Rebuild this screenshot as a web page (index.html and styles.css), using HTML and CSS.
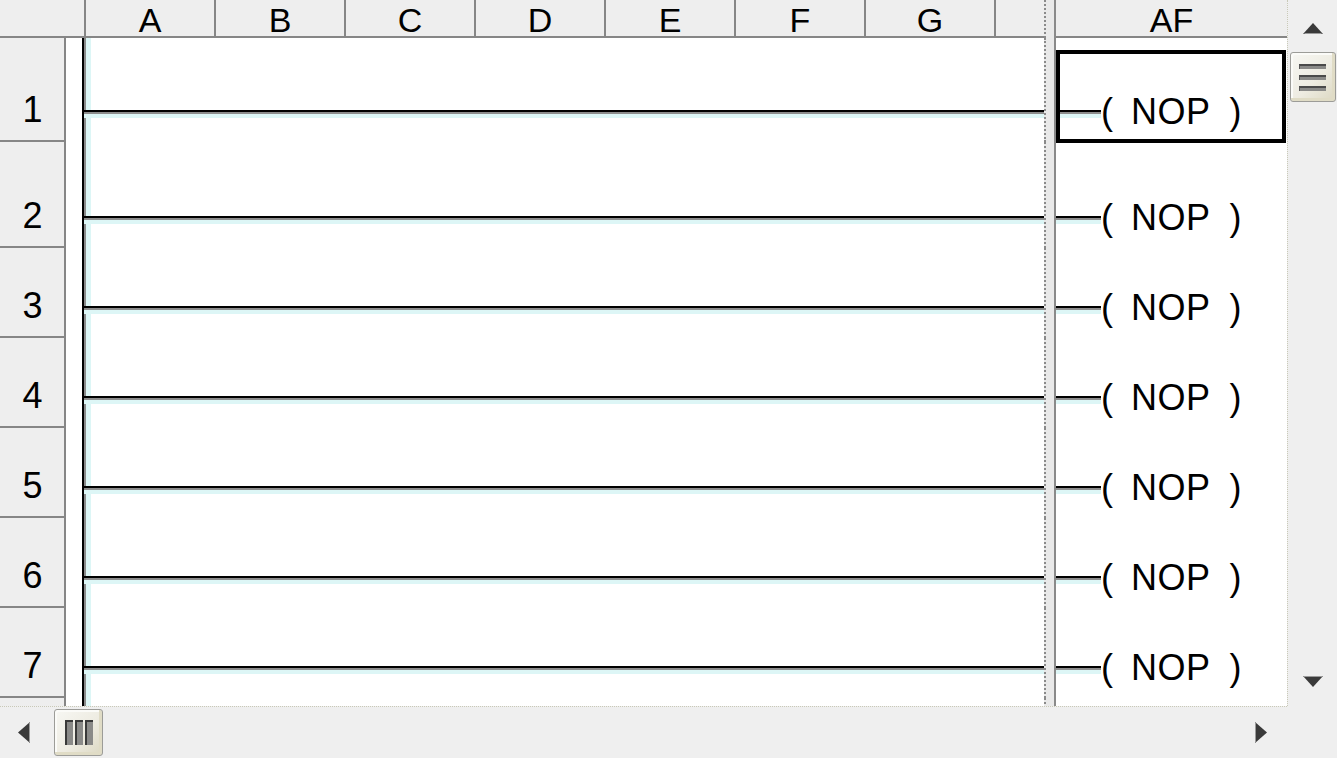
FILE: index.html
```html
<!DOCTYPE html>
<html>
<head>
<meta charset="utf-8">
<title>Ladder</title>
<link rel="stylesheet" href="styles.css">
</head>
<body>
<div class="app">
  <div class="sheet">
    <div class="hdr">
      <div class="hcorner"></div>
      <div class="hcol">A</div>
      <div class="hcol">B</div>
      <div class="hcol">C</div>
      <div class="hcol">D</div>
      <div class="hcol">E</div>
      <div class="hcol">F</div>
      <div class="hcol">G</div>
      <div class="hcol hcol-h"></div>
      <div class="split"></div>
      <div class="hcol hcol-af">AF</div>
    </div>
    <div class="body">
      <div class="row row-1">
        <div class="num">1</div>
        <div class="gutter"></div>
        <div class="ladder"><div class="line"><div class="rung"></div></div></div>
        <div class="split"></div>
        <div class="coil">
          <div class="line"><div class="rung wire"></div><span class="paren">(</span><span class="op">NOP</span><span class="paren paren-r">)</span></div>
          <div class="select"></div>
        </div>
      </div>
      <div class="row row-2">
        <div class="num">2</div>
        <div class="gutter"></div>
        <div class="ladder"><div class="line"><div class="rung"></div></div></div>
        <div class="split"></div>
        <div class="coil">
          <div class="line"><div class="rung wire"></div><span class="paren">(</span><span class="op">NOP</span><span class="paren paren-r">)</span></div>
        </div>
      </div>
      <div class="row">
        <div class="num">3</div>
        <div class="gutter"></div>
        <div class="ladder"><div class="line"><div class="rung"></div></div></div>
        <div class="split"></div>
        <div class="coil">
          <div class="line"><div class="rung wire"></div><span class="paren">(</span><span class="op">NOP</span><span class="paren paren-r">)</span></div>
        </div>
      </div>
      <div class="row">
        <div class="num">4</div>
        <div class="gutter"></div>
        <div class="ladder"><div class="line"><div class="rung"></div></div></div>
        <div class="split"></div>
        <div class="coil">
          <div class="line"><div class="rung wire"></div><span class="paren">(</span><span class="op">NOP</span><span class="paren paren-r">)</span></div>
        </div>
      </div>
      <div class="row">
        <div class="num">5</div>
        <div class="gutter"></div>
        <div class="ladder"><div class="line"><div class="rung"></div></div></div>
        <div class="split"></div>
        <div class="coil">
          <div class="line"><div class="rung wire"></div><span class="paren">(</span><span class="op">NOP</span><span class="paren paren-r">)</span></div>
        </div>
      </div>
      <div class="row">
        <div class="num">6</div>
        <div class="gutter"></div>
        <div class="ladder"><div class="line"><div class="rung"></div></div></div>
        <div class="split"></div>
        <div class="coil">
          <div class="line"><div class="rung wire"></div><span class="paren">(</span><span class="op">NOP</span><span class="paren paren-r">)</span></div>
        </div>
      </div>
      <div class="row">
        <div class="num">7</div>
        <div class="gutter"></div>
        <div class="ladder"><div class="line"><div class="rung"></div></div></div>
        <div class="split"></div>
        <div class="coil">
          <div class="line"><div class="rung wire"></div><span class="paren">(</span><span class="op">NOP</span><span class="paren paren-r">)</span></div>
        </div>
      </div>
      <div class="row">
        <div class="num"></div>
        <div class="gutter"></div>
        <div class="ladder"></div>
        <div class="split"></div>
        <div class="coil"></div>
      </div>
    </div>
  </div>

  <div class="vscroll">
    <div class="sb-btn sb-up">
      <svg width="20" height="11" viewBox="0 0 20 11"><polygon points="10,0 20,11 0,11" fill="#3a3a3a"/><polygon points="2,11 18,11 19,10 1,10" fill="#9a9a9a"/></svg>
    </div>
    <div class="thumb vthumb">
      <span class="grip-h"></span><span class="grip-h"></span><span class="grip-h"></span>
    </div>
    <div class="sb-fill"></div>
    <div class="sb-btn sb-down">
      <svg width="20" height="11" viewBox="0 0 20 11"><polygon points="0,0 20,0 10,11" fill="#3a3a3a"/><polygon points="0,0 20,0 19,1 1,1" fill="#9a9a9a"/></svg>
    </div>
  </div>

  <div class="hscroll">
    <div class="sb-btn sb-left">
      <svg width="12" height="21" viewBox="0 0 12 21"><polygon points="0,10.5 12,0 12,21" fill="#3a3a3a"/><polygon points="11,1 12,0 12,21 11,20" fill="#9a9a9a"/></svg>
    </div>
    <div class="thumb hthumb">
      <span class="grip-v"></span><span class="grip-v"></span><span class="grip-v"></span>
    </div>
    <div class="sb-fill"></div>
    <div class="sb-btn sb-right">
      <svg width="12" height="21" viewBox="0 0 12 21"><polygon points="0,0 12,10.5 0,21" fill="#3a3a3a"/><polygon points="0,0 1,1 1,20 0,21" fill="#9a9a9a"/></svg>
    </div>
  </div>

  <div class="sb-corner"></div>
</div>
</body>
</html>
```

FILE: styles.css
```css
* {
  box-sizing: border-box;
  margin: 0;
  padding: 0;
}

html, body {
  width: 1337px;
  height: 758px;
  overflow: hidden;
  background: #ffffff;
}

body {
  font-family: "Liberation Sans", Arial, sans-serif;
  color: #000000;
}

.app {
  display: grid;
  grid-template-columns: 1287px 50px;
  grid-template-rows: 706px 52px;
  width: 1337px;
  height: 758px;
}

/* ---------- sheet ---------- */
.sheet {
  display: flex;
  flex-direction: column;
  overflow: hidden;
  background: #ffffff;
}

.hdr {
  display: flex;
  height: 38px;
  flex: none;
}

.hcorner {
  width: 86px;
  flex: none;
  background: #eeeeee;
  border-right: 2px solid #868686;
  border-bottom: 2px solid #868686;
}

.hcol {
  width: 130px;
  flex: none;
  background: #eeeeee;
  border-right: 2px solid #868686;
  border-bottom: 2px solid #868686;
  text-align: center;
  font-size: 34px;
  line-height: 32px;
  padding-top: 4px;
}

.hcol-h {
  width: 48px;
  border-right: none;
}

.hcol-af {
  width: 231px;
  border-right: none;
}

.split {
  width: 12px;
  flex: none;
  background: #e9e9e9;
  border-left: 2px dotted #8a8a8a;
  border-right: 2px solid #8a8a8a;
}

.body {
  flex: 1;
  display: flex;
  flex-direction: column;
  overflow: hidden;
}

.row {
  display: flex;
  flex: none;
  height: 90px;
}

.row-1 {
  height: 104px;
}

.row-2 {
  height: 106px;
}

.num {
  width: 66px;
  flex: none;
  background: #eeeeee;
  border-right: 2px solid #868686;
  border-bottom: 2px solid #868686;
  display: flex;
  align-items: flex-end;
  justify-content: center;
  font-size: 36px;
  line-height: 40px;
  padding-bottom: 10px;
  padding-left: 1px;
}

.gutter {
  width: 18px;
  flex: none;
  background: #ffffff;
  border-right: 2px solid #000000;
}

.ladder {
  width: 960px;
  flex: none;
  display: flex;
  flex-direction: column;
  justify-content: flex-end;
  padding-bottom: 10px;
  box-shadow: inset 2px 0 0 #8a8a8a, inset 7px 0 0 #ddf6f6;
}

.line {
  display: flex;
  align-items: flex-start;
  height: 40px;
}

.rung {
  flex: 1;
  height: 8px;
  margin-top: 18px;
  background: linear-gradient(#000000 0 2px, #8c8c8c 2px 4px, #ddf6f6 4px 8px);
}

.coil {
  width: 231px;
  flex: none;
  position: relative;
  display: flex;
  flex-direction: column;
  justify-content: flex-end;
  padding-bottom: 10px;
}

.wire {
  flex: none;
  width: 45px;
}

.paren,
.op {
  font-size: 36px;
  line-height: 40px;
  white-space: nowrap;
}

.op {
  margin-left: 18px;
  letter-spacing: 0.5px;
}

.paren-r {
  margin-left: 19px;
}

.select {
  position: absolute;
  top: 12px;
  left: 0;
  right: 1px;
  bottom: -1px;
  border: 4px solid #000000;
}

/* ---------- scrollbars ---------- */
.vscroll {
  display: flex;
  flex-direction: column;
  align-items: center;
  background: #efefef;
  border-left: 1px dotted #c9c9b8;
}

.hscroll {
  display: flex;
  align-items: center;
  background: #efefef;
  border-top: 1px dotted #c9c9b8;
}

.sb-corner {
  background: #efefef;
}

.sb-btn {
  display: flex;
  align-items: center;
  justify-content: center;
  flex: none;
}

.sb-up {
  width: 100%;
  height: 52px;
  padding-top: 4px;
}

.sb-down {
  width: 100%;
  height: 50px;
}

.sb-left {
  width: 54px;
  height: 100%;
  padding-right: 6px;
}

.sb-right {
  width: 53px;
  height: 100%;
}

.sb-fill {
  flex: 1;
}

.thumb {
  flex: none;
  display: flex;
  align-items: center;
  justify-content: center;
  border: 1px solid #9c9c98;
  border-radius: 3px;
  background: linear-gradient(135deg, #f7f7f3 0%, #eeece2 55%, #dcd8c2 100%);
  box-shadow: inset -3px -3px 0 #e0dcc6, inset 2px 2px 0 #fbfbf8;
}

.vthumb {
  width: 46px;
  height: 50px;
  flex-direction: column;
  gap: 6px;
}

.hthumb {
  width: 49px;
  height: 47px;
  gap: 2px;
}

.grip-h {
  display: block;
  width: 27px;
  height: 5px;
  background: #8a8a88;
  border-top: 2px solid #4a4a4a;
  border-left: 1px solid #5a5a5a;
}

.grip-v {
  display: block;
  width: 8px;
  height: 25px;
  background: #8a8a88;
  border-left: 2px solid #3a3a3a;
  border-top: 2px solid #3a3a3a;
}
```
